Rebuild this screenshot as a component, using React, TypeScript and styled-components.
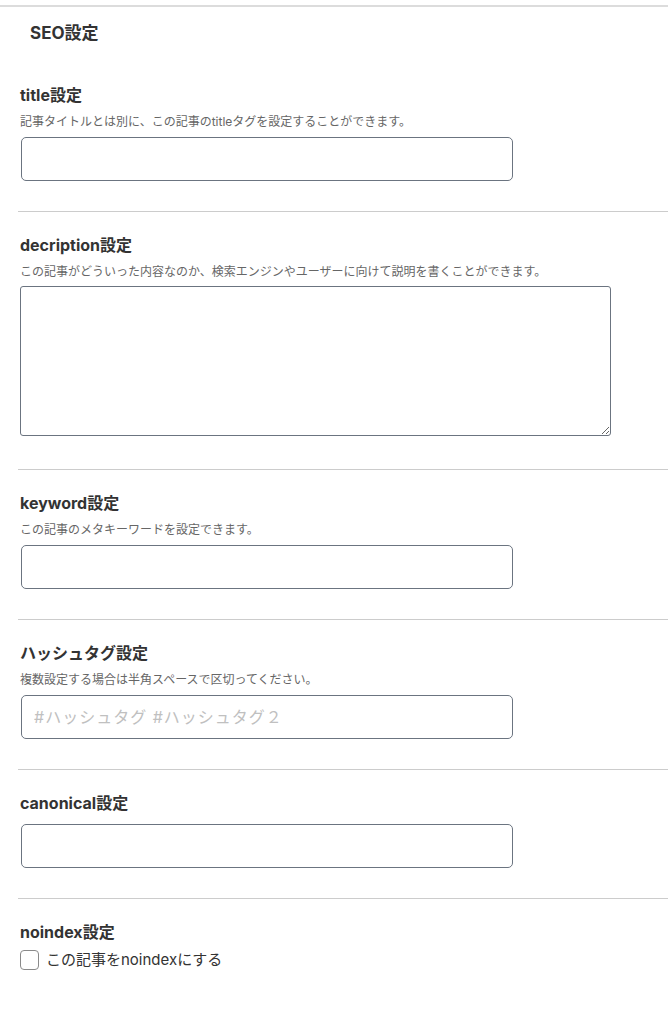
import styled, { createGlobalStyle } from 'styled-components';

const fontStack = 'Inter, "Noto Sans CJK JP", sans-serif';

const GlobalStyle = createGlobalStyle`
  body {
    margin: 0;
    background: #fff;
    font-family: ${fontStack};
    color: #333;
  }
`;

const StyledPanel = styled.div`
  margin-top: 5px;
  border-top: 2px solid #dcdcdc;
  width: 668px;
`;

const StyledHeading = styled.h2`
  margin: 0;
  padding: 14px 30px 17px;
  font-size: 17px;
  line-height: 24px;
  font-weight: bold;
  color: #333;
`;

type StyledSectionProps = {
  last?: boolean;
};

const StyledSection = styled.section<StyledSectionProps>`
  margin-left: 18px;
  padding: 22px 0 30px 2px;
  border-bottom: ${({ last }) => (last ? 'none' : '1px solid #cccccc')};
`;

type StyledLabelProps = {
  gap?: number;
};

const StyledLabel = styled.div<StyledLabelProps>`
  font-size: 16px;
  line-height: 22px;
  font-weight: bold;
  color: #333;
  margin-bottom: ${({ gap }) => gap ?? 8}px;
`;

const StyledDescription = styled.p`
  margin: 0 0 7px;
  font-size: 12px;
  line-height: 16px;
  color: #666;
`;

const StyledInput = styled.input`
  display: block;
  box-sizing: border-box;
  width: 492px;
  height: 44px;
  margin-left: 1px;
  padding: 0 12px;
  border: 1px solid #6b7480;
  border-radius: 5px;
  background: #fff;
  font-size: 16px;
  letter-spacing: 1px;
  font-family: ${fontStack};
  color: #333;
  outline: none;

  &::placeholder {
    color: #c0c0c0;
  }
`;

const StyledTextarea = styled.textarea`
  display: block;
  box-sizing: border-box;
  width: 591px;
  height: 150px;
  margin: -1px 0 3px;
  padding: 8px 12px;
  border: 1px solid #6b7480;
  border-radius: 3px;
  background: #fff;
  font-size: 14px;
  font-family: ${fontStack};
  outline: none;
`;

const StyledCheckboxRow = styled.label`
  display: flex;
  align-items: center;
  gap: 7px;
  margin-top: -1px;
  font-size: 15px;
  line-height: 20px;
  color: #333;
`;

const StyledCheckbox = styled.input`
  appearance: none;
  margin: 0;
  width: 19px;
  height: 20px;
  border: 1px solid #8a8a8a;
  border-radius: 4px;
  background: #fff;
`;

export default function App() {
  return (
    <>
      <GlobalStyle />
      <StyledPanel>
        <StyledHeading>SEO設定</StyledHeading>
        <StyledSection>
          <StyledLabel>title設定</StyledLabel>
          <StyledDescription>
            記事タイトルとは別に、この記事のtitleタグを設定することができます。
          </StyledDescription>
          <StyledInput type="text" />
        </StyledSection>
        <StyledSection>
          <StyledLabel>decription設定</StyledLabel>
          <StyledDescription>
            この記事がどういった内容なのか、検索エンジンやユーザーに向けて説明を書くことができます。
          </StyledDescription>
          <StyledTextarea />
        </StyledSection>
        <StyledSection>
          <StyledLabel>keyword設定</StyledLabel>
          <StyledDescription>この記事のメタキーワードを設定できます。</StyledDescription>
          <StyledInput type="text" />
        </StyledSection>
        <StyledSection>
          <StyledLabel>ハッシュタグ設定</StyledLabel>
          <StyledDescription>複数設定する場合は半角スペースで区切ってください。</StyledDescription>
          <StyledInput type="text" placeholder="#ハッシュタグ #ハッシュタグ２" />
        </StyledSection>
        <StyledSection>
          <StyledLabel gap={10}>canonical設定</StyledLabel>
          <StyledInput type="text" />
        </StyledSection>
        <StyledSection last>
          <StyledLabel>noindex設定</StyledLabel>
          <StyledCheckboxRow>
            <StyledCheckbox type="checkbox" />
            この記事をnoindexにする
          </StyledCheckboxRow>
        </StyledSection>
      </StyledPanel>
    </>
  );
}
